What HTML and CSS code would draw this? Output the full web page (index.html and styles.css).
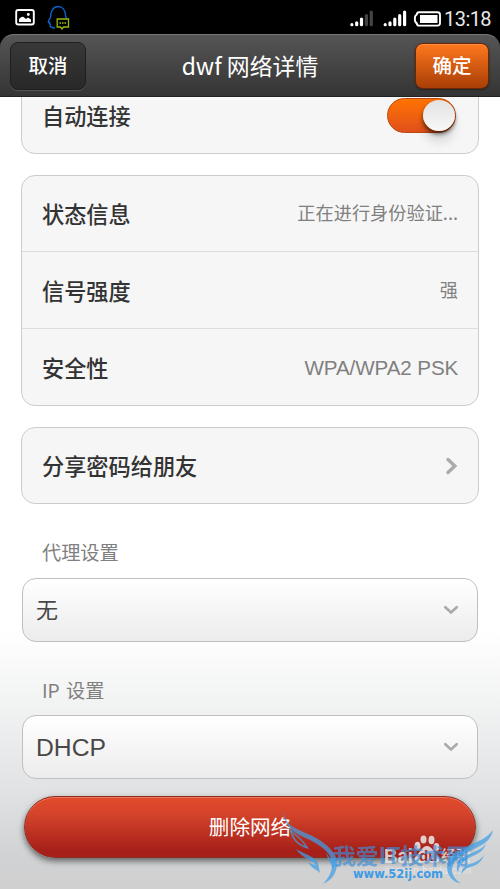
FILE: index.html
```html
<!DOCTYPE html>
<html lang="zh-CN">
<head>
<meta charset="utf-8">
<title>dwf 网络详情</title>
<link rel="stylesheet" href="styles.css">
</head>
<body>
<div class="phone">
  <div class="statusbar">
    <svg class="status-left" width="80" height="34" viewBox="0 0 80 34" fill="none">
      <rect x="16.2" y="10" width="17.6" height="14.5" rx="2" stroke="#fff" stroke-width="1.9"/>
      <path d="M19 22v-2.500c1-2 3-3 4.500-2.500l2.500 2 2-1.500 3 2v2.500z" fill="#fff"/>
      <circle cx="28.300" cy="14.500" r="1.400" fill="#fff"/>
      <path d="M55 28c-1.500 0-3-.5-3.500-1-1 .3-2-.6-1-2-1-1-1-2-.5-3-1.500 1.500-2 .5-1.500-1 .4-1.300 1.500-2.500 2-3.500 0-7 3.300-11 7.500-11s7.500 3.500 7.700 10l.8 2.500" stroke="#0b62c9" stroke-width="1.400"/>
      <path d="M57.200 19h11.300v8h-5l-1.500 2-1.500-2h-3.300z" stroke="#96b80f" stroke-width="1.300"/>
      <path d="M59.500 23h1.500m1 0h1.500m1 0h1.500" stroke="#a8c915" stroke-width="1.500"/>
    </svg>
    <svg class="status-right" width="95" height="34" viewBox="0 0 95 34" fill="none">
      <g stroke-width="3.200" stroke-linecap="round" stroke="#fff">
        <path d="M1.900 24.700v0M6.700 22.800v1.900M11.500 19v5.700"/>
        <path d="M16.400 15.500v9.200M21.300 12v12.700" stroke="#444"/>
        <path d="M35.200 24.700v0M40 22.800v1.900M44.800 19v5.700M49.700 15.500v9.200M54.600 12v12.700"/>
      </g>
      <path d="M69 12.200h18.500q2.500 0 2.500 2.500v8.400q0 2.500-2.500 2.500H69q-2 0-2.300-2.500c-2.500-1-2.500-7.400 0-8.400q.3-2.500 2.300-2.500z" stroke="#fff" stroke-width="1.900"/>
      <rect x="70" y="15" width="17.500" height="8" fill="#fff"/>
    </svg>
    <span class="time">13:18</span>
  </div>
  <header class="header">
    <div class="btn cancel">取消</div>
    <h1>dwf 网络详情</h1>
    <div class="btn confirm">确定</div>
  </header>
  <main class="content">
    <section class="card card-top">
      <div class="row"><span>自动连接</span><i class="switch"><b></b></i></div>
    </section>
    <section class="card">
      <div class="row"><span>状态信息</span><em>正在进行身份验证...</em></div>
      <div class="row"><span>信号强度</span><em>强</em></div>
      <div class="row"><span>安全性</span><em class="latin">WPA/WPA2 PSK</em></div>
    </section>
    <section class="card">
      <div class="row"><span>分享密码给朋友</span>
        <svg class="arrow" width="14" height="20" viewBox="0 0 14 20" fill="none" stroke="#aaa" stroke-width="3.400" stroke-linecap="round"><path d="M4 3.500l6.800 6.500-6.800 6.500"/></svg>
      </div>
    </section>
    <div class="label">代理设置</div>
    <div class="select"><span>无</span>
      <svg width="16" height="12" viewBox="0 0 16 12" fill="none" stroke="#aaa" stroke-width="2.700" stroke-linecap="round"><path d="M2.300 3.200l5.700 5.300 5.700-5.300"/></svg>
    </div>
    <div class="label">IP 设置</div>
    <div class="select"><span class="dhcp">DHCP</span>
      <svg width="16" height="12" viewBox="0 0 16 12" fill="none" stroke="#aaa" stroke-width="2.700" stroke-linecap="round"><path d="M2.300 3.200l5.700 5.300 5.700-5.300"/></svg>
    </div>
    <div class="delete">删除网络</div>
  </main>
  <svg class="watermark" width="230" height="89" viewBox="270 800 230 89">
    <g class="baidu" fill="#e9eaeb" fill-opacity=".86">
      <text x="384" y="863" textLength="29" lengthAdjust="spacingAndGlyphs" class="bai">Bai</text>
      <ellipse cx="417.500" cy="846" rx="3" ry="4.300"/>
      <ellipse cx="423.500" cy="839.500" rx="3" ry="4"/>
      <ellipse cx="431.500" cy="840" rx="3" ry="4.200"/>
      <ellipse cx="436.500" cy="847" rx="2.800" ry="4"/>
      <path d="M427 846c-5 0-8 8-11 10-3 3-1 7 3 7 4-1 12-1 16 0 4 0 6-4 3-7-4-3-6-10-11-10z"/>
      <text x="441" y="861" class="exp">经验</text>
      <text x="385" y="874" textLength="86" class="url">jingyan.baidu.com</text>
    </g>
    <text x="419" y="861" class="du">du</text>
    <g fill="#3f9fe8" fill-opacity=".72">
      <path d="M283 811c2 9 5 13 12 17 9 5 18 7 26 13 10 7 16 14 16 22 0 10-5 17-14 21 6-7 9-12 9-20 0-9-7-15-15-20-9-6-19-8-26-15-5-5-8-11-8-18z"/>
      <path d="M289 827c6 8 13 10 20 22-10-2-18-9-20-22zm3 5c2 7 7 12 13 14-4-7-9-9-13-14z" fill-rule="evenodd"/>
      <path d="M296 849c8 5 18 7 22 14l2 10c-4-4-8-4-12-11 3 2 5 2 8 3-3-5-15-7-20-16z"/>
      <path d="M326 852c3 6 5 8 10 9l-3 8c-2-6-5-8-7-17z"/>
      <path d="M493 830c-3 14-14 16-25 22-12 6-16 12-16 19 1 6 5 10 9 12-8 0-14-8-14-16 0-11 9-16 21-21 11-5 19-8 25-16z"/>
      <path d="M486 844c-3 8-9 10-17 14-7 4-10 8-11 15-3-8 0-13 8-17 8-5 14-5 20-12z"/>
      <path d="M484 855c-3 8-7 10-14 12-4 1-6 4-9 7 1-6 4-9 9-10 7-2 10-4 14-9z"/>
    </g>
    <text x="333" y="864" textLength="136" lengthAdjust="spacingAndGlyphs" class="brand">我爱IT技术网</text>
    <text x="353" y="878" textLength="90" lengthAdjust="spacingAndGlyphs" class="site">www.52ij.com</text>
  </svg>
</div>
</body>
</html>
```
FILE: styles.css
```css
* { box-sizing: border-box; }
body { margin: 0; background: #000; font-family: "Noto Sans CJK SC", sans-serif; }
.phone { position: relative; width: 500px; height: 889px; display: flex; flex-direction: column; overflow: hidden; }
.statusbar { height: 34px; flex: none; display: flex; background: #000; }
.status-right { margin-left: 270px; }
.time { font: 20px/38px Roboto, sans-serif; color: #e8e8e8; margin-left: -1px; letter-spacing: -.55px; white-space: nowrap; }
.header { height: 63px; flex: none; display: flex; justify-content: space-between; align-items: center; padding: 0 11px 0 10px; background: linear-gradient(#555, #343434); border-radius: 14px 14px 0 0; border-top: 1px solid #777; border-bottom: 1px solid #222; color: #fff; }
.header h1 { margin: 0 1px 1px 0; font-size: 22.9px; line-height: 58px; font-weight: 400; }
.btn { width: 76px; height: 48px; border-radius: 8px; text-align: center; font-size: 19.500px; line-height: 44px; font-weight: 500; }
.cancel { background: linear-gradient(#383838, #282828); border: 1px solid #1e1e1e; box-shadow: 0 1px 0 #555; }
.confirm { width: 74px; height: 46px; line-height: 42px; background: linear-gradient(#ff781e, #a83e06); border: 1px solid #6d2803; box-shadow: 0 1px 2px #222, inset 0 1px 0 #ff9143; }
.content { flex: 1; min-height: 0; padding: 0 21px; overflow: hidden; background: linear-gradient(#fff 0, #fff 535px, #f2f3f3 605px, #e3e4e6 685px, #d1d2d3 760px, #d0d0d1 100%); }
.card { border: 1px solid #ccc; border-radius: 14px; background: #f6f6f6; margin-bottom: 21px; }
.card-top { margin-top: -20px; }
.row { height: 77px; display: flex; justify-content: space-between; align-items: center; padding: 0 20px; font-size: 22.200px; font-weight: 500; color: #333; }
.row + .row { border-top: 1px solid #ddd; }
.card .row:first-child { height: 75px; }
.row span { margin-bottom: 2px; }
.row em { margin-bottom: 3px; font-style: normal; font-weight: 400; font-size: 18.200px; color: #808080; }
.row + .row span { margin-bottom: 0; }
.row em.latin { margin: 2px 0 0; font-family: "Liberation Sans", sans-serif; font-size: 20px; letter-spacing: -.1px; transform: scaleX(1.03); transform-origin: right; }
.switch { width: 69px; height: 35px; margin: 0 2px 1px 0; border-radius: 18px; padding: 1px 0 1px 1px; display: flex; justify-content: flex-end; background: linear-gradient(#ff7300, #e0501c); border: 1px solid #b84a10; }
.switch b { width: 32px; height: 31px; border-radius: 50%; background: linear-gradient(#e2e2e2, #f8f8f8); box-shadow: 0 3px 4px rgba(0,0,0,.6), 0 12px 10px rgba(0,0,0,.1); }
.label { height: 36px; margin: 30px 21px 8px; font-size: 19.200px; line-height: 36px; color: #808080; }
.select ~ .label { margin-bottom: 7px; word-spacing: 2px; }
.select { height: 64px; margin: 0 1px; padding: 0 18px 0 13px; display: flex; align-items: center; justify-content: space-between; border: 1px solid #bfbfbf; border-radius: 14px; background: linear-gradient(#fff, #ececec); font-size: 22px; color: #484848; }
.select span { margin-bottom: 4px; }
.select .dhcp { margin: 2px 0 0; font-family: "Liberation Sans", sans-serif; font-size: 24.700px; }
.delete { height: 62px; margin: 17px 3px 0; border-radius: 31px; background: linear-gradient(#e24b2d, #d3422a 30%, #a62019 90%); border: 1px solid #8b3026; box-shadow: 0 3px 6px rgba(0,0,0,.55), inset 0 1px 0 #ee7659; color: #fff; text-align: center; font-size: 20.600px; line-height: 58px; }
.watermark { position: absolute; left: 270px; top: 800px; }
.bai { font: bold 20px "Liberation Sans", sans-serif; }
.du { font: bold 15px "Liberation Sans", sans-serif; fill: #a32a27; }
.exp { font: 500 15px "Noto Sans CJK SC", sans-serif; }
.url { font: 10px "Liberation Sans", sans-serif; }
.brand { font: bold 22px "Noto Sans CJK SC", sans-serif; fill: #3e8fdb; fill-opacity: .66; }
.site { font: bold 12px "DejaVu Sans", sans-serif; fill: #3e9be3; }
```
